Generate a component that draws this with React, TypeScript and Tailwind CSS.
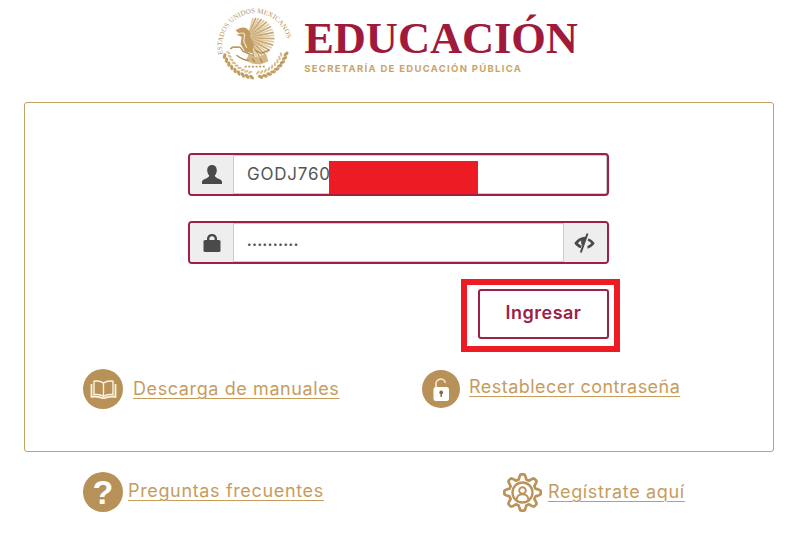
const FONT = "font-['Inter','Open_Sans',sans-serif]";

const polar = (r: number, deg: number) => {
  const a = (deg * Math.PI) / 180;
  return [37 + r * Math.sin(a), 37 - r * Math.cos(a)];
};

// escudo dorado: texto en arco, águila y corona de hojas
function Seal() {
  const leaves = [];
  for (let a = 106; a <= 254; a += 8) {
    if (a > 174 && a < 186) continue;
    const [x, y] = polar(31.5, a);
    const [x2, y2] = polar(27, a + 4);
    leaves.push(
      <g key={a}>
        <ellipse cx={x} cy={y} rx="2.800" ry="1.600" fill="#c39d60" transform={`rotate(${a + 35} ${x} ${y})`} />
        <ellipse cx={x2} cy={y2} rx="2.200" ry="1.100" fill="#d8bf92" transform={`rotate(${a - 35} ${x2} ${y2})`} />
      </g>
    );
  }
  // plumas del ala, en abanico desde el hombro
  const feathers = [];
  for (let a = 15; a <= 165; a += 7) {
    const rad = (a * Math.PI) / 180;
    const len = 18 + 8 * Math.sin(rad);
    feathers.push(
      <line
        key={a}
        x1="30"
        y1="30"
        x2={30 + len * Math.sin(rad)}
        y2={30 - len * Math.cos(rad)}
        stroke={a % 2 === 0 ? "#c9a770" : "#e0cba5"}
        strokeWidth="1.700"
      />
    );
  }
  return (
    <svg width="76" height="76" viewBox="0 0 74 74" aria-hidden className="shrink-0">
      <defs>
        <path id="arc" d="M6 46 A32 32 0 1 1 68 46" />
      </defs>
      <text fontFamily="'Liberation Serif',serif" fontSize="6.900" fill="#b8955c">
        <textPath href="#arc">ESTADOS UNIDOS MEXICANOS</textPath>
      </text>
      {feathers}
      <path d="M18 23c4-3 8-4 11-2 3 2 4 5 3 8l4 7-2 9-7-2-4-7 1-7-5-2 3-1z" fill="#c19a5f" />
      <path d="M21 26c2-1 5-1 6 1l-1 6 3 7" stroke="#f3e8d2" strokeWidth="1.100" fill="none" />
      <path d="M13 41c3-4 5-1 8-2s3 5 6 5 5 3 9 4" stroke="#b8955c" strokeWidth="1.600" fill="none" />
      <path d="M31 46l7 3 10-3 2 7-8 3-8-1-6-3z" fill="#d3b786" />
      <path d="M19 47c4 3 8 5 12 5M37 42l6 3 8-3M34 50l3 4M42 50l2 4" stroke="#a98749" strokeWidth="1.200" fill="none" />
      <path d="M27 58h20" stroke="#c39d60" strokeWidth="1.600" strokeDasharray="2 1.500" />
      {leaves}
    </svg>
  );
}

function Logo() {
  return (
    <div className="flex h-[102px] items-start justify-center pt-[7px]">
      <Seal />
      <div className="ml-[11px] flex flex-col pt-[6px]">
        <span className="font-['Liberation_Serif',serif] text-[44.500px] leading-[50px] font-bold tracking-[-0.1px] text-[#a01a3c]">
          EDUCACIÓN
        </span>
        <span className={`${FONT} text-[9.500px] leading-[12px] font-bold tracking-[1.300px] text-[#c9a468]`}>
          SECRETARÍA DE EDUCACIÓN PÚBLICA
        </span>
      </div>
    </div>
  );
}

function AddonBox({ children, side }: { children: React.ReactNode; side: "left" | "right" }) {
  return (
    <div
      className={`flex w-[44px] shrink-0 items-center justify-center bg-[#eeeeee] ${
        side === "left" ? "border-r border-[#cccccc]" : "border-l border-[#cccccc]"
      }`}
    >
      {children}
    </div>
  );
}

function UserIcon() {
  return (
    <svg width="20" height="19" viewBox="0 0 20 19" fill="#4a4a4a">
      <path d="M10 0c3.200 0 4.800 2.300 4.800 5.300 0 2.100-.8 4-2 5.300.1 1.100.7 1.700 2.100 2.300 2.300 1 4.600 1.600 5.100 3.600V19H0v-2.500c.5-2 2.800-2.600 5.100-3.600 1.400-.6 2-1.200 2.100-2.300-1.200-1.300-2-3.200-2-5.300C5.200 2.300 6.800 0 10 0z" />
    </svg>
  );
}

function LockIcon() {
  return (
    <svg width="18" height="18" viewBox="0 0 18 18" fill="#4a4a4a">
      <path d="M4 7V4.500C4 1.800 6 0 9 0s5 1.800 5 4.500V7h-2.400V4.800C11.600 3.200 10.600 2.300 9 2.300s-2.600.9-2.600 2.500V7z" />
      <rect x="0.500" y="6" width="17" height="12" rx="1.500" />
    </svg>
  );
}

function SlashEyeIcon() {
  return (
    <svg width="21" height="20" viewBox="0 0 21 20" fill="#4a4a4a" className="-ml-[2px]">
      <path d="M11 3.800C6 4 2.800 7 0.300 10.200 2 12.600 4 14.300 6.500 15.300l1.500-2.700C6.200 12 5 11 3.900 10.200c1-1.200 2.200-2.100 3.400-2.700-.6 2.200 0 4 1.300 5.100L12.800 3.800z" />
      <path d="M13.500 0.500L6.800 19.500" stroke="#4a4a4a" strokeWidth="2" fill="none" />
      <path d="M14.500 5.300c2.500 1 4.600 2.800 6.200 4.900-1.500 2.500-4.100 4.600-7 5.500l-.4-2.600c1.800-.7 3-1.800 4-2.900-1-1-2.200-1.800-3.600-2.400z" />
    </svg>
  );
}

function BookIcon() {
  return (
    <svg width="27" height="19" viewBox="0 0 27 19" fill="none" stroke="#fdf3df" strokeWidth="1.400">
      <path d="M13.500 3C11 1.200 7.500.7 4 1.200v13.500c3.500-.5 7-.1 9.500 1.800 2.500-1.900 6-2.300 9.500-1.800V1.200C19.500.7 16 1.200 13.500 3z" />
      <path d="M13.500 3v13.500" />
      <path d="M1.500 4v12.800c4-.5 8.500-.2 12 1.700 3.500-1.900 8-2.200 12-1.700V4" strokeWidth="1.800" />
    </svg>
  );
}

function OpenLockIcon() {
  return (
    <svg width="17" height="23" viewBox="0 0 17 23">
      <path d="M3 10V6a4.700 4.700 0 0 1 9.300-1.200" fill="none" stroke="#f3e4c8" strokeWidth="1.700" />
      <rect x="0.500" y="9" width="15.500" height="14" rx="2.500" fill="#fff" />
      <circle cx="8.200" cy="14.500" r="1.900" fill="#8a6a3a" />
      <rect x="7.500" y="14.500" width="1.400" height="4.500" fill="#8a6a3a" />
    </svg>
  );
}

// contorno del engrane: ocho dientes redondeados
function gearPath() {
  const points: string[] = [];
  for (let i = 0; i < 160; i++) {
    const t = (i / 160) * Math.PI * 2;
    const wave = Math.max(-1, Math.min(1, 1.5 * Math.cos(8 * t)));
    const r = 15.800 + 2.400 * wave;
    points.push(`${(19.500 + r * Math.sin(t)).toFixed(2)} ${(19.500 - r * Math.cos(t)).toFixed(2)}`);
  }
  return `M${points.join("L")}Z`;
}

function GearIcon() {
  return (
    <svg width="39" height="39" viewBox="0 0 39 39" fill="none" stroke="#bb9359" strokeWidth="2.700" strokeLinejoin="round">
      <path d={gearPath()} />
      <circle cx="19.500" cy="19.500" r="10" strokeWidth="2.300" />
      <circle cx="19.500" cy="17.500" r="3.300" strokeWidth="1.900" />
      <path d="M13.500 26.500c.5-3.600 2.800-5.200 6-5.200s5.500 1.600 6 5.200" strokeWidth="1.900" />
    </svg>
  );
}

function Circle({ children, size }: { children: React.ReactNode; size: string }) {
  return <div className={`flex shrink-0 items-center justify-center rounded-full bg-[#b89158] ${size}`}>{children}</div>;
}

const linkClass = `${FONT} text-[18px] leading-[22px] text-[#c69c5d] underline underline-offset-[3px] decoration-1`;

export default function App() {
  return (
    <div className={`h-[535px] w-[795px] overflow-hidden bg-white ${FONT}`}>
      <Logo />

      <main className="ml-[24px] flex h-[350px] w-[750px] flex-col rounded-[3px] border border-[#c49f63] pt-[50px]">
        <div className="ml-[163px] flex h-[43px] w-[421px] overflow-hidden rounded-[4px] border-2 border-[#a01f43] shadow-[inset_0_0_0_1px_#cccccc]">
          <AddonBox side="left">
            <UserIcon />
          </AddonBox>
          <div className="relative flex flex-1 items-center pt-[1px] pl-[13px] text-[17px] tracking-[0.800px] text-[#555555]">
            GODJ760
            <div className="absolute top-[6px] left-[95px] h-[33px] w-[149px] bg-[#ed1c24]" />
          </div>
        </div>

        <div className="mt-[25px] ml-[163px] flex h-[43px] w-[421px] overflow-hidden rounded-[4px] border-2 border-[#a01f43] shadow-[inset_0_0_0_1px_#cccccc]">
          <AddonBox side="left">
            <LockIcon />
          </AddonBox>
          <div className="flex flex-1 items-center pt-[2px] pl-[13px] text-[8px] leading-none tracking-[0.700px] text-[#555555]">
            ••••••••••
          </div>
          <AddonBox side="right">
            <SlashEyeIcon />
          </AddonBox>
        </div>

        <div className="mt-[15px] ml-[436px] h-[73px] w-[159px] border-[6px] border-[#ed1c24] pt-[4px] pl-[11px]">
          <button className="h-[50px] w-[131px] rounded-[3px] border-2 border-[#9b2247] pb-[3px] text-[18px] font-semibold tracking-[0.500px] text-[#9b2247]">
            Ingresar
          </button>
        </div>

        <div className="mt-[17px] flex">
          <div className="ml-[58px] flex w-[339px] items-center">
            <Circle size="h-[40px] w-[40px]">
              <BookIcon />
            </Circle>
            <a className={`${linkClass} ml-[10px] tracking-[0.600px]`}>Descarga de manuales</a>
          </div>
          <div className="flex items-center">
            <Circle size="h-[38px] w-[38px]">
              <OpenLockIcon />
            </Circle>
            <a className={`${linkClass} -mt-[4px] ml-[9px] tracking-[0.460px]`}>Restablecer contraseña</a>
          </div>
        </div>
      </main>

      <footer className="mt-[20px] flex">
        <div className="ml-[83px] flex w-[420px] items-center">
          <Circle size="h-[40px] w-[40px]">
            <span className="font-['Liberation_Sans',sans-serif] text-[34px] leading-none font-bold text-white">?</span>
          </Circle>
          <a className={`${linkClass} -mt-[2px] ml-[5px] tracking-[0.650px]`}>Preguntas frecuentes</a>
        </div>
        <div className="flex items-center">
          <GearIcon />
          <a className={`${linkClass} ml-[6px] tracking-[0.660px]`}>Regístrate aquí</a>
        </div>
      </footer>
    </div>
  );
}
